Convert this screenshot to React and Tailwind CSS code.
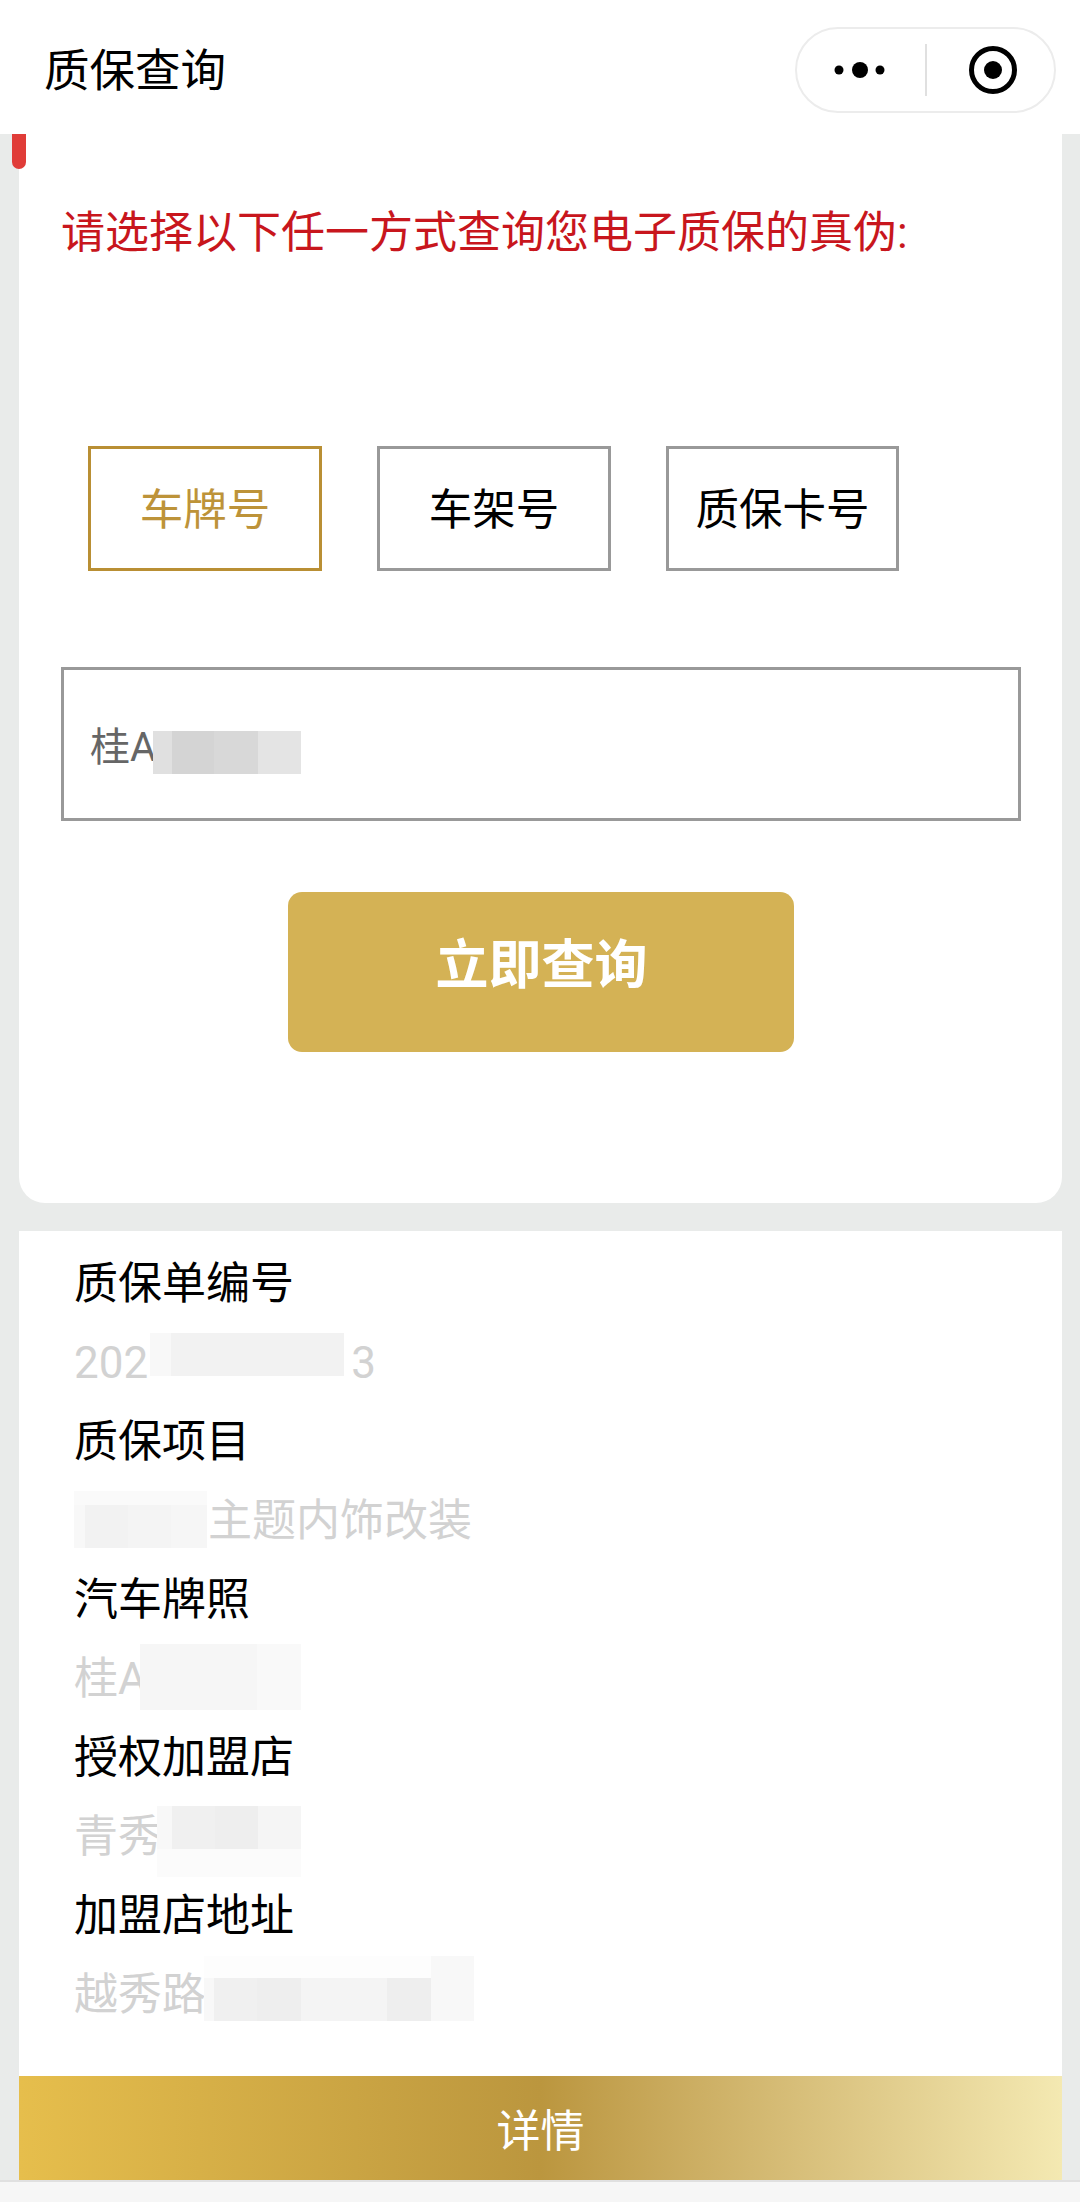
const fontStack = "[font-family:Roboto,'Noto_Sans_CJK_SC',sans-serif]";

/* pixelated blur blocks over the private parts of a value */
function Mosaic({ className = '', rows }) {
  return (
    <div className={`flex flex-col shrink-0 ${className}`}>
      {rows.map((row, i) => (
        <div key={i} className={`flex ${row.h}`}>
          {row.cells.map((cell, j) => (
            <div key={j} className={cell} />
          ))}
        </div>
      ))}
    </div>
  );
}

function TabButton({ active, className, children }) {
  return (
    <button
      className={`h-[125px] pt-[4px] border-[3px] text-[43.5px] leading-none bg-white flex items-center justify-center ${className} ${
        active ? 'border-[#b98f34] text-[#bd9339]' : 'border-[#999999] text-black'
      }`}
    >
      {children}
    </button>
  );
}

function InfoRow({ label, children }) {
  return (
    <div>
      <div className="h-[79px] leading-[79px] text-black">{label}</div>
      <div className="h-[79px] leading-[79px] text-[#d2d2d2] flex">{children}</div>
    </div>
  );
}

export default function App() {
  return (
    <div className={`w-[1080px] h-[2202px] flex flex-col overflow-hidden bg-[#e9ebea] ${fontStack}`}>
      {/* Nav bar */}
      <div className="h-[134px] shrink-0 bg-white flex items-center justify-between pl-[44px] pr-[24px]">
        <h1 className="mt-[10px] text-[45.5px] leading-none font-normal text-black">质保查询</h1>
        <div className="w-[261px] h-[86px] mt-[6px] rounded-full border-2 border-[#ececec] flex items-center">
          <svg width="128" height="52" viewBox="0 0 128 52" className="shrink-0">
            <circle cx="42" cy="26" r="4.5" fill="#000" />
            <circle cx="63" cy="26" r="8" fill="#000" />
            <circle cx="83" cy="26" r="4.5" fill="#000" />
          </svg>
          <div className="w-[2px] h-[52px] shrink-0 bg-[#e0e0e0]" />
          <svg width="127" height="52" viewBox="0 0 127 52" className="shrink-0">
            <circle cx="66" cy="26" r="21.5" fill="none" stroke="#000" strokeWidth="5" />
            <circle cx="66" cy="26" r="9" fill="#000" />
          </svg>
        </div>
      </div>

      <div className="flex-1 flex flex-col relative">
        {/* Red marker */}
        <div className="absolute left-[12px] top-0 w-[14px] h-[35px] bg-[#e03c38] rounded-b-full" />

        {/* Query card */}
        <div className="ml-[19px] mr-[18px] bg-white rounded-b-[26px] pt-[69px] pb-[151px]">
          <p className="px-[42px] text-[44px] leading-[60px] text-[#c8161d]">请选择以下任一方式查询您电子质保的真伪:</p>

          <div className="mt-[183px] ml-[69px] flex gap-[55px]">
            <TabButton active className="w-[234px]">车牌号</TabButton>
            <TabButton className="w-[234px]">车架号</TabButton>
            <TabButton className="w-[233px]">质保卡号</TabButton>
          </div>

          <div className="mt-[96px] ml-[42px] mr-[41px] h-[154px] border-[3px] border-[#999999] pl-[26px] pt-[8px] flex items-center">
            <span className="text-[40px] leading-none text-[#666666]">桂A</span>
            <Mosaic
              className="mt-[8px] -ml-[3px]"
              rows={[
                {
                  h: 'h-[43px]',
                  cells: [
                    'w-[19px] bg-[#e0e0e0]',
                    'w-[42px] bg-[#d4d4d4]',
                    'w-[44px] bg-[#d8d8d8]',
                    'w-[43px] bg-[#e4e4e4]',
                  ],
                },
              ]}
            />
          </div>

          <button className="mt-[71px] mx-auto w-[506px] h-[160px] pb-[12px] pl-[2px] rounded-[14px] bg-[#d4b255] text-white text-[53px] leading-none font-bold flex items-center justify-center">
            立即查询
          </button>
        </div>

        {/* Warranty info */}
        <div className="mt-[28px] ml-[19px] mr-[18px] flex-1 bg-white flex flex-col text-[44px]">
          <div className="flex-1 pt-[14px] px-[55px]">
            <InfoRow label="质保单编号">
              <span>202</span>
              <Mosaic
                className="mt-[9px] ml-[2px]"
                rows={[{ h: 'h-[43px]', cells: ['w-[21px] bg-[#f8f8f8]', 'w-[173px] bg-[#f2f2f2]'] }]}
              />
              <span className="ml-[7px]">3</span>
            </InfoRow>
            <InfoRow label="质保项目">
              <Mosaic
                className="mt-[9px]"
                rows={[
                  { h: 'h-[14px]', cells: ['w-[133px] bg-[#fafafa]'] },
                  {
                    h: 'h-[43px]',
                    cells: [
                      'w-[11px] bg-[#f8f8f8]',
                      'w-[43px] bg-[#f2f2f2]',
                      'w-[43px] bg-[#f4f4f4]',
                      'w-[36px] bg-[#f6f6f6]',
                    ],
                  },
                ]}
              />
              <span className="ml-[1px]">主题内饰改装</span>
            </InfoRow>
            <InfoRow label="汽车牌照">
              <span>桂A</span>
              <Mosaic
                className="mt-[4px] -ml-[7px]"
                rows={[{ h: 'h-[66px]', cells: ['w-[117px] bg-[#f6f6f6]', 'w-[44px] bg-[#f9f9f9]'] }]}
              />
            </InfoRow>
            <InfoRow label="授权加盟店">
              <span>青秀</span>
              <Mosaic
                className="mt-[8px] -ml-[5px]"
                rows={[
                  {
                    h: 'h-[43px]',
                    cells: [
                      'w-[15px] bg-[#f8f8f8]',
                      'w-[43px] bg-[#f0f0f0]',
                      'w-[43px] bg-[#eeeeee]',
                      'w-[43px] bg-[#f5f5f5]',
                    ],
                  },
                  { h: 'h-[28px]', cells: ['w-[144px] bg-[#fbfbfb]'] },
                ]}
              />
            </InfoRow>
            <InfoRow label="加盟店地址">
              <span>越秀路</span>
              <Mosaic
                className="-ml-[2px]"
                rows={[
                  { h: 'h-[22px]', cells: ['w-[227px] bg-[#fdfdfd]', 'w-[43px] bg-[#f8f8f8]'] },
                  {
                    h: 'h-[43px]',
                    cells: [
                      'w-[10px] bg-[#f8f8f8]',
                      'w-[43px] bg-[#f0f0f0]',
                      'w-[44px] bg-[#eeeeee]',
                      'w-[86px] bg-[#f4f4f4]',
                      'w-[44px] bg-[#eeeeee]',
                      'w-[43px] bg-[#f8f8f8]',
                    ],
                  },
                ]}
              />
            </InfoRow>
          </div>
          <div className="h-[104px] shrink-0 pt-[8px] flex items-center justify-center text-white bg-gradient-to-r from-[#e6be4c] via-[#bb963e] to-[#f4e9b2]">
            详情
          </div>
        </div>
      </div>

      {/* Home indicator strip */}
      <div className="h-[22px] shrink-0 bg-[#f6f6f6] border-t-2 border-[#e0e0e0]" />
    </div>
  );
}
